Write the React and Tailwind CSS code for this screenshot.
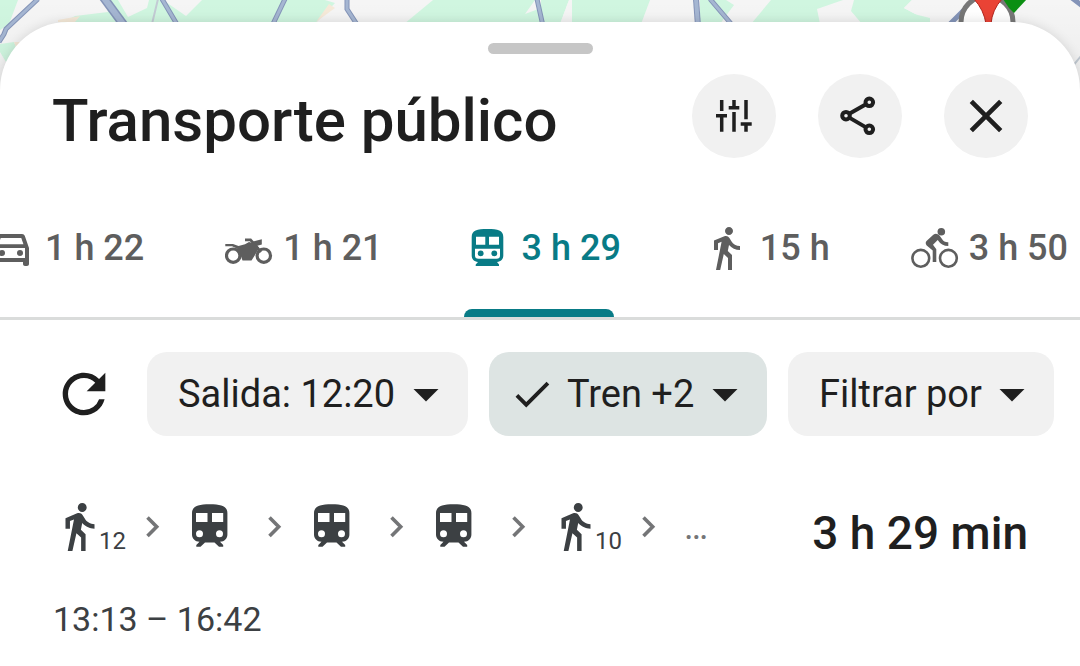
import { MdArrowDropDown, MdCheck, MdClose, MdDirectionsWalk, MdOutlineDirectionsCar, MdRefresh } from 'react-icons/md';

const MapStrip = () => (
  <svg viewBox="0 0 1080 96" preserveAspectRatio="xMidYMin slice" className="block h-24 w-full shrink-0 bg-[#f5f5f5]" aria-hidden="true">
    <defs>
      <linearGradient id="shade" x1="0" y1="0" x2="0" y2="1">
        <stop offset="0" stopColor="#000" stopOpacity="0" />
        <stop offset="1" stopColor="#000" stopOpacity="0.04" />
      </linearGradient>
    </defs>

    {/* Parks */}
    <g fill="#d0f6e0">
      <path d="M0 0H18L9 24L0 30ZM0 44L14 42L17 50L6 62L0 52Z" />
      <path d="M60 24L75 16L108 12L105 0H325L335 3L315 24Z" />
      <path d="M433 0H569L560 24H404Z" />
      <path d="M572 0H650L641 24H572ZM700 0H726L734 5L728 13L720 24H700Z" />
      <path d="M771 0H843L817 9L820 24H751ZM854 0H912L904 8L934 24H862L851 11Z" />
    </g>
    <path
      d="M118 0L128 17L147 8L149 0ZM163 0H202L186 16ZM535 0L525 14L541 8V0ZM569 0H572V24H560ZM912 0L904 8L934 24H960V0Z"
      fill="#f5f5f5"
    />
    <path d="M882 6L930 18V24H877Z" fill="#d0f6e0" />
    <path d="M329 4L335 8L316 22ZM58 20L80 16L75 22H58ZM14 42L22 42L17 50Z" fill="#f6ead9" />

    {/* Roads */}
    <g fill="none" stroke="#8494b8" strokeWidth="5">
      <path d="M38 -1L6 29L4 34L-1 42M162 -1L178 26M285 -1L272 26M347 -1V9L358 26M537 -1L543 26M710 -1L733 26M950 24L964 10M1072 -2L1084 7" />
      <path d="M101 -6L126 28" strokeWidth="9" />
      <path d="M696 -1L698 26" strokeWidth="6" />
    </g>
    <g fill="none" stroke="#a5b6d2" strokeWidth="3">
      <path d="M38 -1L6 29L4 34L-1 42M162 -1L178 26M285 -1L272 26M347 -1V9L358 26M537 -1L543 26M710 -1L733 26" />
      <path d="M101 -6L126 28" strokeWidth="6" />
      <path d="M696 -1L698 26" strokeWidth="4" />
    </g>
    <path d="M158 -1L152 24M1072 67L1081 56" fill="none" stroke="#c3cbd4" strokeWidth="2" />

    {/* Destination pin */}
    <circle cx="987" cy="22" r="26" fill="#fff" stroke="#777" strokeWidth="5" />
    <path d="M1003 -1H1027L1014 13L1009 8Z" fill="#0b8f12" />
    <path d="M974 -1H1002Q992 10 991 24H986Q984 10 974 -1Z" fill="#ea4335" stroke="#b3261e" strokeWidth="1" />
    <rect width="1080" height="96" fill="url(#shade)" />
  </svg>
);

const TuneIcon = () => (
  <svg viewBox="0 0 84 84" className="size-[84px]" fill="none" stroke="currentColor" strokeWidth="3.5">
    <path d="M29.7 26V37M24 41.7H35M29.7 41.7V57.7M42 26V33.7M36.7 33.7H47.3M42 38V57.7M54 26V45.3M48.7 50H59.7M54 50V57.7" />
  </svg>
);

const ShareIcon = () => (
  <svg viewBox="0 0 84 84" className="size-[84px]" fill="none" stroke="currentColor" strokeWidth="4">
    <circle cx="51.3" cy="28.3" r="3.8" />
    <circle cx="28" cy="41.7" r="3.8" />
    <circle cx="51.3" cy="55.3" r="3.8" />
    <path d="M31.3 39.8L48 30.2M31.3 43.6L48 53.4" />
  </svg>
);

const MotorbikeIcon = () => (
  <svg viewBox="0 0 48 48" className="size-12" fill="currentColor">
    <g fill="none" stroke="currentColor">
      <circle cx="8.2" cy="31.7" r="6.7" strokeWidth="3.2" />
      <circle cx="38.8" cy="31.7" r="6.7" strokeWidth="3.2" />
      <path d="M20 15.8H25.5L36 28" strokeWidth="2.8" />
    </g>
    <path d="M.3 20H8L13.5 22L20 20.2L24 18L31 20L34 24L30 31L26.5 36.5H17.5L15.5 31L12 24.5L7 22.3L.3 22.3Z" />
    <path d="M28 17.5L36.8 15.3V20.5L31.5 22Z" />
  </svg>
);

const TransitIcon = () => (
  <svg viewBox="0 0 48 48" className="size-12" fill="currentColor">
    <path
      fillRule="evenodd"
      d="M23.5 5C13 5 7.7 6.5 7.7 13V31.5C7.7 35 10 37.7 14 38L11.7 40.5V42H35V40.5L33 38C37 37.7 39.3 35 39.3 31.5V13C39.3 6.5 34 5 23.5 5ZM12 12.7H21.3V20.7H12ZM25 12.7H35V20.7H25ZM11 24.7H36V31.5Q36 34.7 32.5 34.7H14.5Q11 34.7 11 31.5Z"
    />
    <circle cx="16.7" cy="29.4" r="2.9" />
    <circle cx="30.3" cy="29.4" r="2.9" />
  </svg>
);

const BikeIcon = () => (
  <svg viewBox="0 0 48 48" className="size-12" fill="currentColor">
    <g fill="none" stroke="currentColor" strokeWidth="2.6">
      <circle cx="9.8" cy="34.3" r="8.4" />
      <circle cx="37.4" cy="34.3" r="8.4" />
    </g>
    <circle cx="30.3" cy="7.7" r="3.8" />
    <path d="M22.3 10.7L15.5 17Q13.8 19 15.7 21.5L21.7 26.5V38H25.3V25.3L22 20.7L26.7 16Q30.5 22 37.3 22V18.3Q33 18.5 31 15L28.5 11.5Q25.5 8.5 22.3 10.7Z" />
  </svg>
);

const WalkStep = ({ minutes }) => (
  <span className="flex items-end gap-px">
    <svg viewBox="4.5 1.5 16 21.5" className="h-12 w-9" fill="currentColor" aria-label="A pie">
      <path d="M13.5 5.5c1.1 0 2-.9 2-2s-.9-2-2-2-2 .9-2 2 .9 2 2 2zM9.8 8.9L7 23h2.1l1.8-8 2.1 2v6h2v-7.5l-2.1-2 .6-3C14.8 12 16.8 13 19 13v-2c-1.9 0-3.5-1-4.3-2.4l-1-1.6c-.4-.6-1-1-1.7-1-.3 0-.5.1-.8.1L6 8.3V13h2V9.6l1.8-.7" />
    </svg>
    <span className="text-2xl leading-5">{minutes}</span>
  </span>
);

const TrainStep = () => (
  <svg viewBox="0 0 36 48" className="mr-5 h-12 w-9" fill="currentColor" aria-label="Tren">
    <path
      fillRule="evenodd"
      d="M17.7 1.3C6 1.3 0 3.5 0 10V31.5C0 35.5 3 38.7 7.5 38.7L4.3 42V43.7H8.5L13 39.5H22.5L27 43.7H31.2V42L28 38.7C32.5 38.7 35.4 35.5 35.4 31.5V10C35.4 3.5 29.5 1.3 17.7 1.3ZM4 10H15.5V19H4ZM20 10H31.2V19H20ZM7.5 27.2A3.5 3.5 0 1 0 7.5 34.2A3.5 3.5 0 1 0 7.5 27.2ZM27.5 27.2A3.5 3.5 0 1 0 27.5 34.2A3.5 3.5 0 1 0 27.5 27.2Z"
    />
  </svg>
);

const Chevron = () => (
  <svg viewBox="0 0 14 48" className="mr-8 ml-5 h-12 w-[14px]" fill="none" stroke="#747577" strokeWidth="3.6" aria-hidden="true">
    <path d="M1.5 14.5L10.7 23.7L1.5 33" />
  </svg>
);

const actions = [
  { label: 'Opciones', icon: <TuneIcon /> },
  { label: 'Compartir', icon: <ShareIcon /> },
  { label: 'Cerrar', icon: <MdClose className="size-14" /> },
];

const modes = [
  { label: 'Coche', time: '1 h 22', icon: <MdOutlineDirectionsCar className="size-12" /> },
  { label: 'Moto', time: '1 h 21', icon: <MotorbikeIcon /> },
  { label: 'Transporte público', time: '3 h 29', icon: <TransitIcon />, active: true },
  { label: 'A pie', time: '15 h', icon: <MdDirectionsWalk className="size-12" /> },
  { label: 'Bicicleta', time: '3 h 50', icon: <BikeIcon /> },
];

const filters = [
  { label: 'Hora de salida', value: 'Salida: 12:20' },
  { label: 'Medios de transporte', value: 'Tren +2', checked: true },
  { label: 'Filtros', value: 'Filtrar por' },
];

const steps = [
  { type: 'walk', minutes: 12 },
  { type: 'train' },
  { type: 'train' },
  { type: 'train' },
  { type: 'walk', minutes: 10 },
];

const FilterChip = ({ label, value, checked }) => (
  <label
    className={`flex h-[84px] shrink-0 items-center rounded-[20px] pr-3 ${
      checked ? 'bg-[#dde4e3] pl-5' : 'bg-[#f1f1f1] pl-[31px]'
    }`}
  >
    {checked && <MdCheck className="mr-3 size-[46px]" />}
    <select aria-label={label} className="appearance-none bg-transparent text-[38px] leading-12 outline-none">
      <option>{value}</option>
    </select>
    <MdArrowDropDown className="size-[60px]" />
  </label>
);

export default function App() {
  return (
    <div className="flex min-h-screen flex-col overflow-hidden bg-white font-['Roboto',sans-serif] text-[#1f1f1f]">
      <MapStrip />

      <main className="relative -mt-[74px] grow rounded-t-[68px] bg-white pt-[21px] shadow-[0_0_12px_rgba(0,0,0,0.12)]">
        <div className="mx-auto h-[11px] w-[105px] rounded-full bg-[#c6c6c6]" />

        <header className="mt-5 flex items-start justify-between px-[52px]">
          <h1 className="pt-[5px] text-[60px] leading-[84px] font-medium">Transporte público</h1>
          <div className="flex gap-[42px]">
            {actions.map((action) => (
              <button key={action.label} aria-label={action.label} className="flex size-[84px] items-center justify-center rounded-full bg-[#f1f1f1]">
                {action.icon}
              </button>
            ))}
          </div>
        </header>

        {/* Travel modes */}
        <nav className="mt-[37px] flex gap-[81px] overflow-hidden border-b-[3px] border-[#dadcdb] text-[#5e5e5e]">
          {modes.map((mode) => (
            <button
              key={mode.label}
              aria-label={`${mode.label} ${mode.time}`}
              className={`relative flex h-[117px] shrink-0 items-center gap-[10px] pb-[21px] text-[36px] font-medium first:-ml-[13px] ${
                mode.active ? 'text-[#087b86]' : ''
              }`}
            >
              {mode.icon}
              <span className="whitespace-nowrap">{mode.time}</span>
              {mode.active && <span className="absolute bottom-0 left-0 h-2 w-[150px] rounded-t-lg bg-[#087b86]" />}
            </button>
          ))}
        </nav>

        {/* Filters */}
        <div className="mt-8 flex items-center gap-[21px] pl-[52px]">
          <button aria-label="Actualizar" className="mr-[10px] shrink-0">
            <MdRefresh className="size-16" />
          </button>
          {filters.map((filter) => (
            <FilterChip key={filter.label} {...filter} />
          ))}
        </div>

        {/* Route */}
        <section className="mt-[67px] pr-[52px] pl-[53px] text-[#3c4043]">
          <div className="flex items-start justify-between">
            <ol className="flex items-center pl-[9px]">
              {steps.map((step, index) => (
                <li key={index} className="flex items-center">
                  {step.type === 'walk' ? <WalkStep minutes={step.minutes} /> : <TrainStep />}
                  <Chevron />
                </li>
              ))}
              <li className="-ml-1 text-[36px] leading-12 text-[#747577]">…</li>
            </ol>
            <p className="text-[46px] leading-[60px] font-medium text-[#1f1f1f]">3 h 29 min</p>
          </div>
          <p className="mt-[30px] text-[34px] leading-[52px]">13:13 – 16:42</p>
        </section>
      </main>
    </div>
  );
}
